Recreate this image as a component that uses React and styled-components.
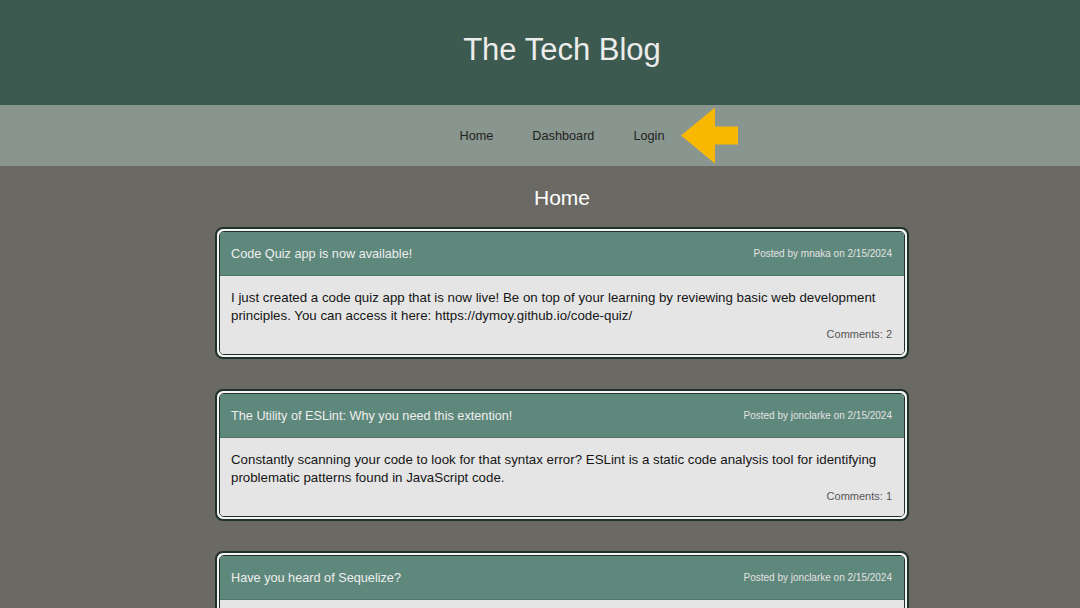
import styled, { createGlobalStyle } from 'styled-components';

const GlobalStyle = createGlobalStyle`
  html, body {
    margin: 0;
    padding: 0;
    background: #6b6964;
    font-family: "Liberation Sans", Arial, sans-serif;
  }
`;

const POSTS = [
  {
    id: 1,
    title: 'Code Quiz app is now available!',
    author: 'mnaka',
    date: '2/15/2024',
    body: 'I just created a code quiz app that is now live! Be on top of your learning by reviewing basic web development principles. You can access it here: https://dymoy.github.io/code-quiz/',
    comments: 2,
  },
  {
    id: 2,
    title: 'The Utility of ESLint: Why you need this extention!',
    author: 'jonclarke',
    date: '2/15/2024',
    body: 'Constantly scanning your code to look for that syntax error? ESLint is a static code analysis tool for identifying problematic patterns found in JavaScript code.',
    comments: 1,
  },
  {
    id: 3,
    title: 'Have you heard of Sequelize?',
    author: 'jonclarke',
    date: '2/15/2024',
    body: 'Sequelize is a modern TypeScript and Node.js ORM for Oracle, Postgres, MySQL, MariaDB, SQLite and SQL Server, and more.',
    comments: 0,
  },
];

const Page = styled('div')`
  height: 100vh;
  overflow: hidden;
  background: #6b6964;
`;

const Header = styled('header')`
  height: 105px;
  background: #3d5a50;
  display: flex;
  align-items: center;
  justify-content: center;
  padding-left: 44px;
  box-sizing: border-box;
`;

const SiteTitle = styled('h1')`
  margin: 0 0 6px;
  font-size: 31px;
  font-weight: 400;
  color: #ececec;
`;

const Nav = styled('nav')`
  height: 61px;
  background: #89968f;
  display: flex;
  align-items: center;
  justify-content: center;
  padding: 1px 0 0 44px;
  box-sizing: border-box;
`;

const NavLink = styled('a')`
  position: relative;
  padding: 0 19.5px;
  font-size: 12.7px;
  color: #222;
  text-decoration: none;
  cursor: pointer;
`;

const Arrow = styled('svg')`
  position: absolute;
  left: calc(100% - 3px);
  top: 50%;
  transform: translateY(-50%);
`;

const Main = styled('main')`
  display: flex;
  flex-direction: column;
  align-items: center;
  padding: 20px 0 0 44px;
  gap: 30px;
`;

const PageHeading = styled('h2')`
  margin: 0 0 -13px;
  font-size: 21px;
  font-weight: 400;
  color: #fff;
`;

const Card = styled('article')`
  width: 694px;
  box-sizing: border-box;
  border: 2px solid #1d3129;
  border-radius: 8px;
  background: #f4f4f4;
  padding: 2px;
  flex-shrink: 0;
`;

const CardInner = styled('div')`
  border: 1px solid #1d3129;
  border-radius: 5px;
  overflow: hidden;
`;

const CardHeader = styled('div')`
  height: 43px;
  display: flex;
  align-items: center;
  justify-content: space-between;
  padding: 0 12px 0 11px;
  background: #5f887c;
  border-bottom: 1px solid #4f7669;
`;

const CardTitle = styled('span')`
  font-size: 12.7px;
  color: #eeeeee;
`;

const Meta = styled('span')`
  font-size: 10px;
  color: #e2e2e2;
`;

const CardBody = styled('div')`
  background: #e5e5e5;
  padding: 13px 12px 11px 11px;
`;

const BodyText = styled('p')`
  margin: 0;
  font-size: 13.3px;
  line-height: 18px;
  color: #161616;
`;

const Comments = styled('div')`
  text-align: right;
  font-size: 11px;
  line-height: 18px;
  color: #555;
`;

const PostCard = ({ title, author, date, body, comments }) => (
  <Card>
    <CardInner>
      <CardHeader>
        <CardTitle>{title}</CardTitle>
        <Meta>
          Posted by {author} on {date}
        </Meta>
      </CardHeader>
      <CardBody>
        <BodyText>{body}</BodyText>
        <Comments>Comments: {comments}</Comments>
      </CardBody>
    </CardInner>
  </Card>
);

const App = () => (
  <Page>
    <GlobalStyle />
    <Header>
      <SiteTitle>The Tech Blog</SiteTitle>
    </Header>
    <Nav>
      <NavLink>Home</NavLink>
      <NavLink>Dashboard</NavLink>
      <NavLink>
        Login
        <Arrow width='57' height='57' viewBox='0 0 57 57'>
          <polygon points='0,28 34,0 34,19 57,19 57,37 34,37 34,56' fill='#f8b800' />
        </Arrow>
      </NavLink>
    </Nav>
    <Main>
      <PageHeading>Home</PageHeading>
      {POSTS.map((post) => (
        <PostCard key={post.id} {...post} />
      ))}
    </Main>
  </Page>
);

export default App;
